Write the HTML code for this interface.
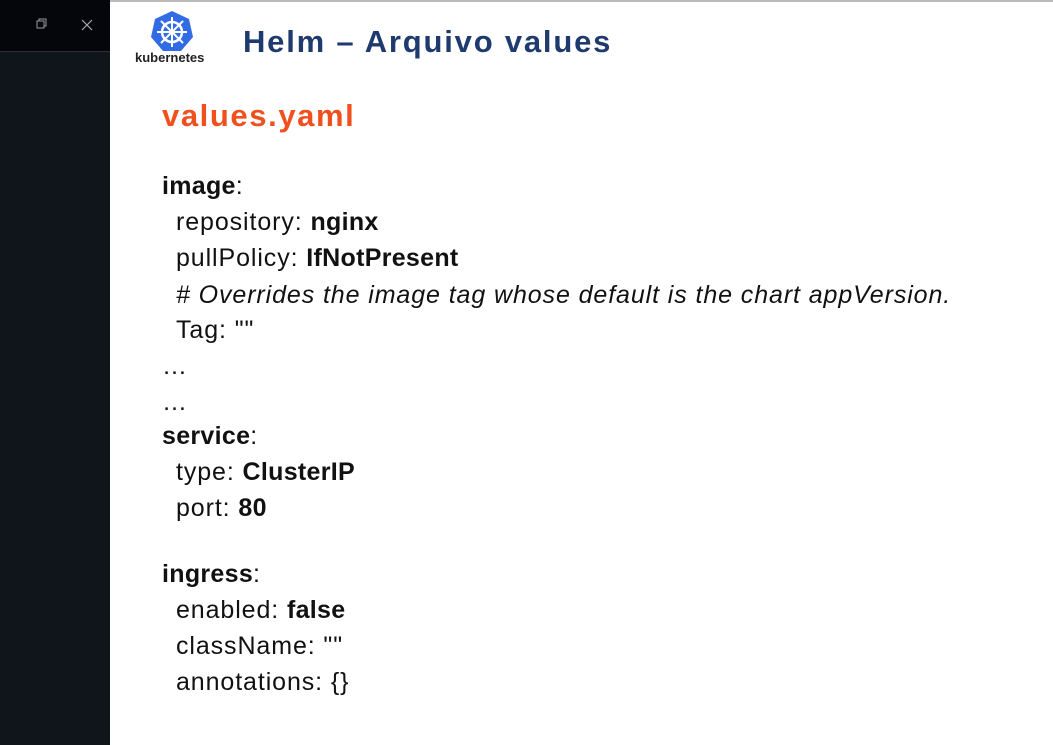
<!DOCTYPE html>
<html><head><style>
body{margin:0;width:1053px;height:745px;background:#fff;position:relative;overflow:hidden;font-family:"Liberation Sans",sans-serif}
.l{position:absolute;left:0;top:0;width:110px;height:745px;background:#10141b}
.lt{position:absolute;left:0;top:0;width:110px;height:51px;background:#04060b;border-bottom:1px solid #2a2e36}
.tb{position:absolute;left:110px;top:0;width:943px;height:2px;background:#bbb}
.t{position:absolute;white-space:nowrap;color:#111;font-size:25px;letter-spacing:0.9px}
b{font-weight:bold;letter-spacing:0.3px}
</style></head><body>
<div class="l"></div><div class="lt"></div><div class="tb"></div>
<svg style="position:absolute;left:36px;top:18px" width="12" height="12"><rect x="1" y="3" width="7" height="7" fill="none" stroke="#999"/><path d="M3 3V1h7v7H8" fill="none" stroke="#999"/></svg>
<svg style="position:absolute;left:81px;top:19px" width="12" height="12"><path d="M1 1L11 11M11 1L1 11" stroke="#aaa" stroke-width="1.2"/></svg>
<svg style="position:absolute;left:150px;top:10px" width="44" height="42" viewBox="0 0 44 42"><polygon points="22,1 39,9 43,27 31,41 13,41 1,27 5,9" fill="#326ce5"/><circle cx="22" cy="22" r="10" fill="none" stroke="#fff" stroke-width="2.5"/><circle cx="22" cy="22" r="3" fill="#fff"/><path d="M22 7v30M7 22h30M11 11l22 22M33 11L11 33" stroke="#fff" stroke-width="2"/></svg>
<div class="t" style="left:135px;top:50px;font-size:13px;font-weight:bold;color:#222;letter-spacing:0">kubernetes</div>
<div class="t" style="left:243px;top:24px;font-size:31px;font-weight:bold;color:#1f3a6e;letter-spacing:1.8px">Helm – Arquivo values</div>
<div class="t" style="left:162px;top:98px;font-size:31px;font-weight:bold;color:#f0501e;letter-spacing:1.6px">values.yaml</div>
<div class="t" style="left:162px;top:172px"><b>image</b>:</div>
<div class="t" style="left:176px;top:208px">repository: <b>nginx</b></div>
<div class="t" style="left:176px;top:244px">pullPolicy: <b>IfNotPresent</b></div>
<div class="t" style="left:176px;top:281px;font-style:italic"># Overrides the image tag whose default is the chart appVersion.</div>
<div class="t" style="left:176px;top:316px">Tag: ""</div>
<div class="t" style="left:162px;top:352px">…</div>
<div class="t" style="left:162px;top:388px">…</div>
<div class="t" style="left:162px;top:422px"><b>service</b>:</div>
<div class="t" style="left:176px;top:458px">type: <b>ClusterIP</b></div>
<div class="t" style="left:176px;top:494px">port: <b>80</b></div>
<div class="t" style="left:162px;top:560px"><b>ingress</b>:</div>
<div class="t" style="left:176px;top:596px">enabled: <b>false</b></div>
<div class="t" style="left:176px;top:632px">className: ""</div>
<div class="t" style="left:176px;top:668px">annotations: {}</div>
</body></html>
